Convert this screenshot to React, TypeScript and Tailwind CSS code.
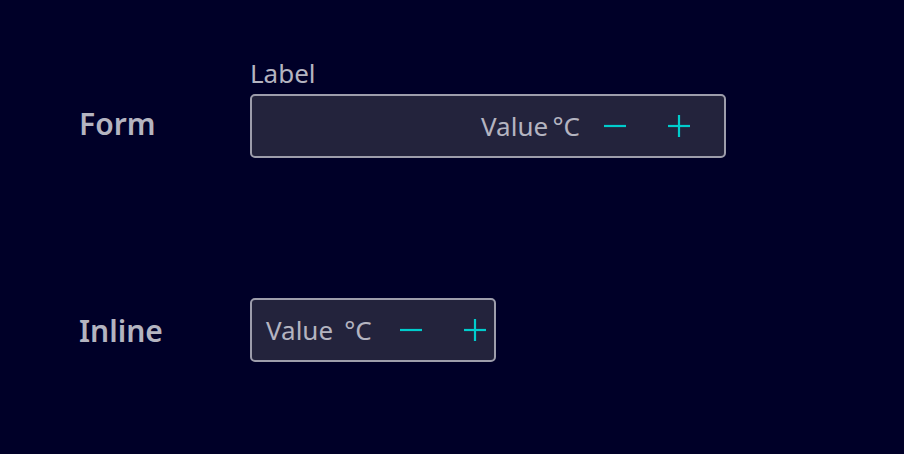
const font = { fontFamily: '"Noto Sans", "Open Sans", sans-serif' }

function StepIcon({ plus = false }: { plus?: boolean }) {
  return (
    <svg viewBox="0 0 22 22" className="h-[22px] w-[22px]" fill="none" stroke="currentColor" strokeWidth={2.2}>
      <path d="M0 11h22" />
      {plus && <path d="M11 0v22" />}
    </svg>
  )
}

function Stepper({ inline = false }: { inline?: boolean }) {
  return (
    <div
      className={`flex h-[64px] items-center rounded-[5px] border-2 border-[#9d9dab] bg-[#23233c] ${
        inline ? 'w-[246px] pl-[14px] pr-[1px]' : 'w-[476px] justify-end pr-[29px]'
      }`}
    >
      <span className={`text-[26px] leading-none text-[#b4b4c0] ${inline ? 'mr-[23px]' : 'mr-[19px]'}`}>
        {inline ? 'Value\u00a0\u2009°C' : 'Value\u2009°C'}
      </span>
      <div className="flex shrink-0 gap-[32px]">
        <button className="flex h-[32px] w-[32px] items-center justify-center text-[#00cccc]">
          <StepIcon />
        </button>
        <button className="flex h-[32px] w-[32px] items-center justify-center text-[#00cccc]">
          <StepIcon plus />
        </button>
      </div>
    </div>
  )
}

export default function App() {
  return (
    <div className="h-[454px] w-[904px] bg-[#000028] pl-[79px] pt-[56px]" style={font}>
      <div className="flex">
        <div className="flex h-[64px] w-[171px] items-center self-end pb-[6px]">
          <span className="text-[30px] font-semibold text-[#b4b4c0]">Form</span>
        </div>
        <div className="flex flex-col">
          <span className="mb-[4px] text-[26px] leading-[34px] text-[#b4b4c0]">Label</span>
          <Stepper />
        </div>
      </div>
      <div className="mt-[140px] flex">
        <div className="flex h-[64px] w-[171px] items-center">
          <span className="text-[30px] font-semibold text-[#b4b4c0]">Inline</span>
        </div>
        <Stepper inline />
      </div>
    </div>
  )
}
